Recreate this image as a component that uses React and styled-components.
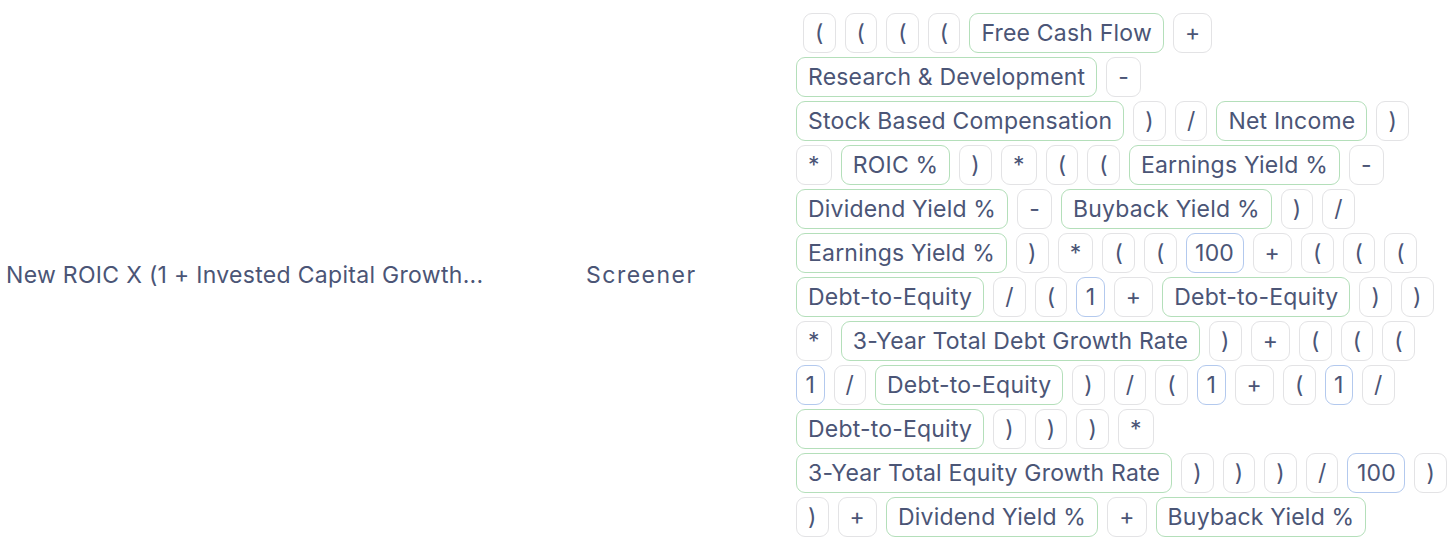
import React from 'react';
import styled, { createGlobalStyle } from 'styled-components';

const GlobalStyle = createGlobalStyle`
  html, body {
    margin: 0;
    padding: 0;
    background: #ffffff;
  }
  body {
    font-family: Inter, "Noto Sans", sans-serif;
    color: #4b5576;
  }
`;

const Row = styled.div`
  display: grid;
  grid-template-columns: 580px 210px 1fr;
  align-items: center;
  width: 1456px;
  box-sizing: border-box;
`;

const Cell = styled.div`
  padding: 13px 6px 12px;
  font-size: 23px;
  line-height: 28px;
  letter-spacing: ${(p) => p.$spacing || '0.3px'};
  min-width: 0;
`;

const NameCell = styled(Cell)`
  white-space: nowrap;
  overflow: hidden;
  text-overflow: ellipsis;
`;

const FormulaCell = styled(Cell)`
  padding-right: 6.5px;
`;

const Formula = styled.div`
  display: flex;
  flex-wrap: wrap;
  column-gap: 9px;
  row-gap: 4px;
`;

const borders = {
  field: '#b4dfba',
  num: '#b3c9ee',
  op: '#e3e3e5',
};

const Chip = styled.span`
  display: inline-flex;
  align-items: center;
  box-sizing: border-box;
  height: 40px;
  padding: 0 ${(p) => (p.$kind === 'num' ? '8.5px' : '11px')};
  border: 1px solid ${(p) => borders[p.$kind]};
  border-radius: 9px;
  font-size: 23px;
  letter-spacing: 0.2px;
  white-space: nowrap;
  color: #4b5576;
  &:first-child {
    margin-left: ${(p) => (p.$kind === 'op' ? '7px' : '0')};
  }
`;

const formula = [
  '(', '(', '(', '(', 'f:Free Cash Flow', '+',
  'f:Research & Development', '-',
  'f:Stock Based Compensation', ')', '/', 'f:Net Income', ')',
  '*', 'f:ROIC %', ')', '*', '(', '(', 'f:Earnings Yield %', '-',
  'f:Dividend Yield %', '-', 'f:Buyback Yield %', ')', '/',
  'f:Earnings Yield %', ')', '*', '(', '(', 'n:100', '+', '(', '(', '(',
  'f:Debt-to-Equity', '/', '(', 'n:1', '+', 'f:Debt-to-Equity', ')', ')',
  '*', 'f:3-Year Total Debt Growth Rate', ')', '+', '(', '(', '(',
  'n:1', '/', 'f:Debt-to-Equity', ')', '/', '(', 'n:1', '+', '(', 'n:1', '/',
  'f:Debt-to-Equity', ')', ')', ')', '*',
  'f:3-Year Total Equity Growth Rate', ')', ')', ')', '/', 'n:100', ')',
  ')', '+', 'f:Dividend Yield %', '+', 'f:Buyback Yield %',
];

function parse(token) {
  if (token.startsWith('f:')) return { kind: 'field', text: token.slice(2) };
  if (token.startsWith('n:')) return { kind: 'num', text: token.slice(2) };
  return { kind: 'op', text: token };
}

export default function App() {
  return (
    <>
      <GlobalStyle />
      <Row>
        <NameCell>New ROIC X (1 + Invested Capital Growth...</NameCell>
        <Cell $spacing="1.5px">Screener</Cell>
        <FormulaCell>
          <Formula>
            {formula.map((t, i) => {
              const { kind, text } = parse(t);
              return (
                <Chip key={i} $kind={kind}>
                  {text}
                </Chip>
              );
            })}
          </Formula>
        </FormulaCell>
      </Row>
    </>
  );
}
